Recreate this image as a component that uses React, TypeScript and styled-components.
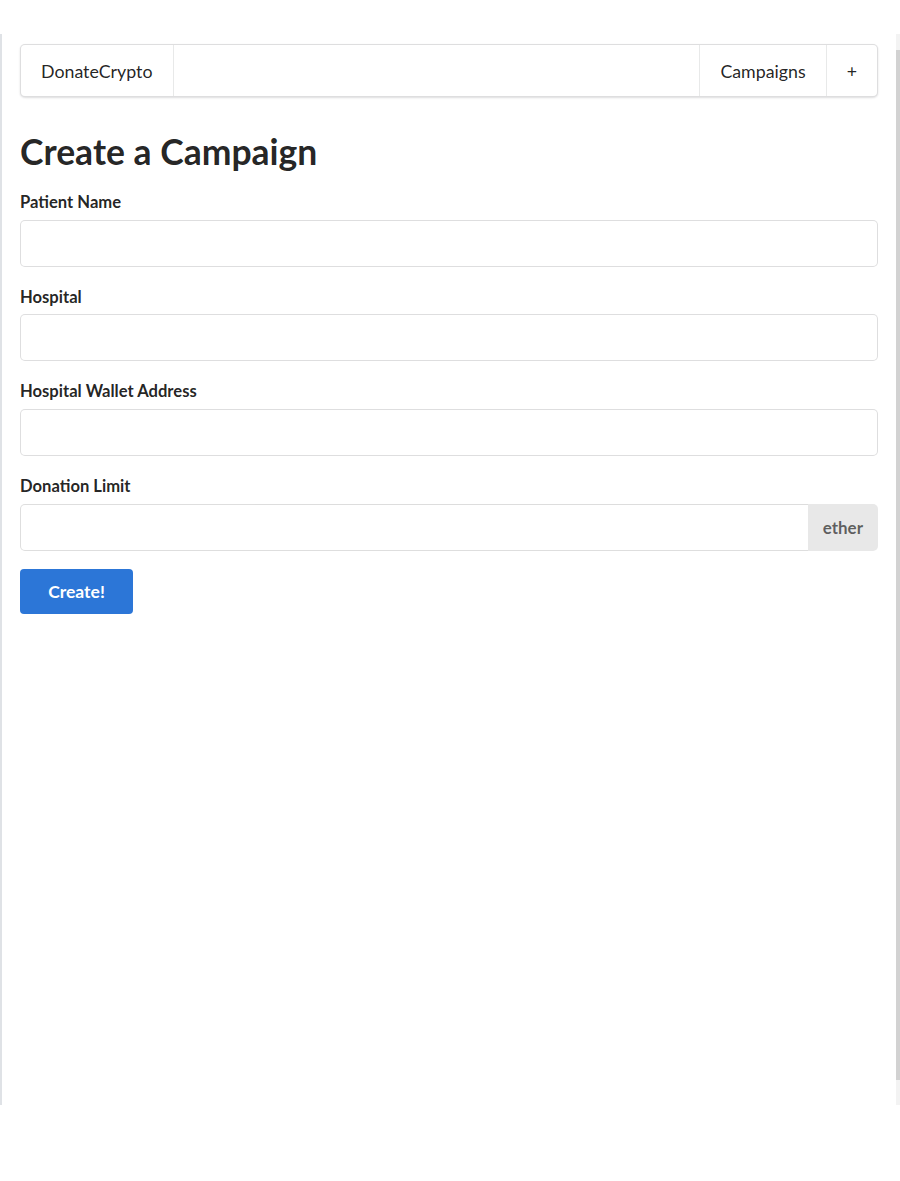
import React from "react";
import styled, { createGlobalStyle } from "styled-components";

const Global = createGlobalStyle`
  html, body { margin: 0; padding: 0; background: #ffffff; }
  body { font-family: Lato, "Helvetica Neue", Arial, sans-serif; color: rgba(0,0,0,0.87); }
  * { box-sizing: border-box; }
`;

const Page = styled.div`
  padding-top: 34px;
  height: 1181px;
  background: #fff;
`;

const Frame = styled.div`
  height: 1071px;
  display: flex;
  border-left: 2px solid #dfe2e6;
`;

const Content = styled.div`
  flex: 1;
  padding: 10px 18px 0 18px;
  display: flex;
  flex-direction: column;
`;

const Scrollbar = styled.div`
  width: 4px;
  background: #f3f3f3;
  padding-top: 16px;
  padding-bottom: 25px;
  display: flex;
`;

const Thumb = styled.div`
  width: 2px;
  flex: 1;
  background: #d2d2d2;
`;

const Menu = styled.nav`
  display: flex;
  height: 53px;
  border: 1px solid rgba(34, 36, 38, 0.15);
  border-radius: 5px;
  box-shadow: 0 1px 2px 0 rgba(34, 36, 38, 0.15);
  background: #fff;
`;

const Item = styled.a<{ $sep?: "left" | "right" }>`
  display: flex;
  align-items: center;
  padding: 0 20px;
  font-size: 17.8px;
  color: rgba(0, 0, 0, 0.87);
  text-decoration: none;
  cursor: pointer;
  border-right: ${(p) => (p.$sep === "right" ? "1px solid rgba(34,36,38,0.1)" : "none")};
  border-left: ${(p) => (p.$sep === "left" ? "1px solid rgba(34,36,38,0.1)" : "none")};
`;

const Spacer = styled.div`
  flex: 1;
`;

const Title = styled.h1`
  margin: 34px 0 0 0;
  font-size: 35.5px;
  line-height: 1.2;
  font-weight: 700;
  color: rgba(0, 0, 0, 0.87);
`;

const Form = styled.form`
  display: flex;
  flex-direction: column;
  margin-top: 19px;
`;

const Field = styled.div`
  display: flex;
  flex-direction: column;
  margin-bottom: 21px;
`;

const Label = styled.label`
  font-size: 16.6px;
  line-height: 1.2;
  font-weight: 700;
  color: rgba(0, 0, 0, 0.87);
  margin-bottom: 7px;
`;

const InputRow = styled.div`
  display: flex;
  height: 47px;
`;

const Input = styled.input<{ $labeled?: boolean }>`
  flex: 1;
  min-width: 0;
  height: 47px;
  border: 1px solid rgba(34, 36, 38, 0.15);
  border-radius: ${(p) => (p.$labeled ? "5px 0 0 5px" : "5px")};
  border-right: ${(p) => (p.$labeled ? "none" : "1px solid rgba(34,36,38,0.15)")};
  padding: 0 17px;
  font-family: Lato, sans-serif;
  font-size: 17.5px;
  outline: none;
  background: #fff;
`;

const Unit = styled.div`
  display: flex;
  align-items: center;
  padding: 0 15px;
  background: #e8e8e8;
  border-radius: 0 5px 5px 0;
  font-size: 17px;
  font-weight: 700;
  color: rgba(0, 0, 0, 0.6);
`;

const Button = styled.button`
  align-self: flex-start;
  width: 113px;
  height: 45px;
  margin-top: -3px;
  border: none;
  border-radius: 4px;
  background: #2c76d7;
  color: #fff;
  font-family: Lato, sans-serif;
  font-size: 17.5px;
  font-weight: 700;
  cursor: pointer;
`;

export default function App() {
  return (
    <Page>
      <Global />
      <Frame>
        <Content>
          <Menu>
            <Item $sep="right">DonateCrypto</Item>
            <Spacer />
            <Item $sep="left">Campaigns</Item>
            <Item $sep="left">+</Item>
          </Menu>
          <Title>Create a Campaign</Title>
          <Form onSubmit={(e) => e.preventDefault()}>
            <Field>
              <Label>Patient Name</Label>
              <InputRow>
                <Input />
              </InputRow>
            </Field>
            <Field>
              <Label>Hospital</Label>
              <InputRow>
                <Input />
              </InputRow>
            </Field>
            <Field>
              <Label>Hospital Wallet Address</Label>
              <InputRow>
                <Input />
              </InputRow>
            </Field>
            <Field>
              <Label>Donation Limit</Label>
              <InputRow>
                <Input $labeled />
                <Unit>ether</Unit>
              </InputRow>
            </Field>
            <Button type="submit">Create!</Button>
          </Form>
        </Content>
        <Scrollbar>
          <Thumb />
        </Scrollbar>
      </Frame>
    </Page>
  );
}
